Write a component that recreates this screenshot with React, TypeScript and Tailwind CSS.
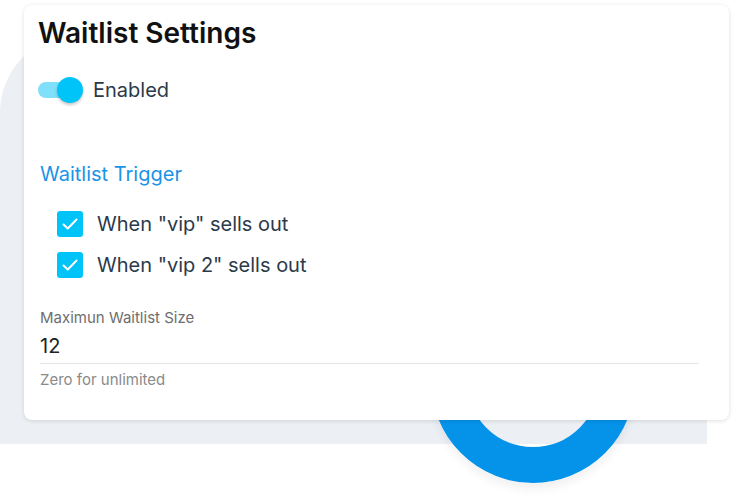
import React from 'react';

const font = { fontFamily: 'Inter, "Noto Sans", sans-serif' };

function Toggle() {
  return (
    <div className="relative w-[46px] h-[26px] shrink-0">
      <div className="absolute left-0 top-[5px] w-[42px] h-[16px] rounded-full bg-[#80dffb]" />
      <div className="absolute left-[19px] top-0 w-[26px] h-[26px] rounded-full bg-[#00c3f8] shadow-[0_2px_3px_rgba(0,0,0,0.22)]" />
    </div>
  );
}

function CheckRow({ label }: { label: string }) {
  return (
    <div className="flex items-center h-[40px] pl-[19px]">
      <div className="w-[26px] h-[26px] rounded-[3px] bg-[#00c3f8] flex items-center justify-center shrink-0">
        <svg width="26" height="26" viewBox="0 0 26 26" fill="none">
          <polyline points="6.5,13.5 10.8,17.5 19.5,8.5" stroke="white" strokeWidth="2" strokeLinecap="round" strokeLinejoin="round" />
        </svg>
      </div>
      <span className="ml-[14px] text-[20px] text-[#2b3a4a]">{label}</span>
    </div>
  );
}

export default function App() {
  return (
    <div className="relative w-[736px] h-[498px] bg-white overflow-hidden" style={font}>
      {/* background decorations */}
      <div className="absolute left-0 top-[33px] w-[707px] h-[411px] bg-[#ecf0f4] rounded-tl-[80px]" />
      <div className="absolute left-[431px] top-[279px] w-[204px] h-[204px] rounded-full border-[36px] border-[#0593ea] shadow-[0_6px_10px_rgba(0,0,0,0.06)]" />

      <div className="relative ml-[24px] mt-[5px] w-[705px] h-[415px] bg-white rounded-[8px] shadow-[0_1px_4px_rgba(0,0,0,0.13)] pt-[10px] pl-[14px] pr-[30px]">
        <h1 className="text-[28px] leading-[36px] font-semibold text-[#111]">Waitlist Settings</h1>

        <div className="flex items-center h-[40px] mt-[19px]">
          <Toggle />
          <span className="ml-[9px] text-[20px] text-[#2b3a4a]">Enabled</span>
        </div>

        <div className="mt-[50px] pl-[2px] text-[20px] leading-[28px] text-[#1a94e6]">Waitlist Trigger</div>

        <div className="mt-[16px] flex flex-col gap-[1px]">
          <CheckRow label={'When "vip" sells out'} />
          <CheckRow label={'When "vip 2" sells out'} />
        </div>

        <div className="mt-[23px] pl-[2px]">
          <div className="text-[15px] leading-[20px] text-[#6e6e6e]">Maximun Waitlist Size</div>
          <div className="mt-[4px] pb-[3px] border-b border-[#e4e4e4] text-[20px] leading-[28px] text-[#222]">12</div>
          <div className="mt-[6px] text-[15px] leading-[20px] text-[#8a8a8a]">Zero for unlimited</div>
        </div>
      </div>
    </div>
  );
}
